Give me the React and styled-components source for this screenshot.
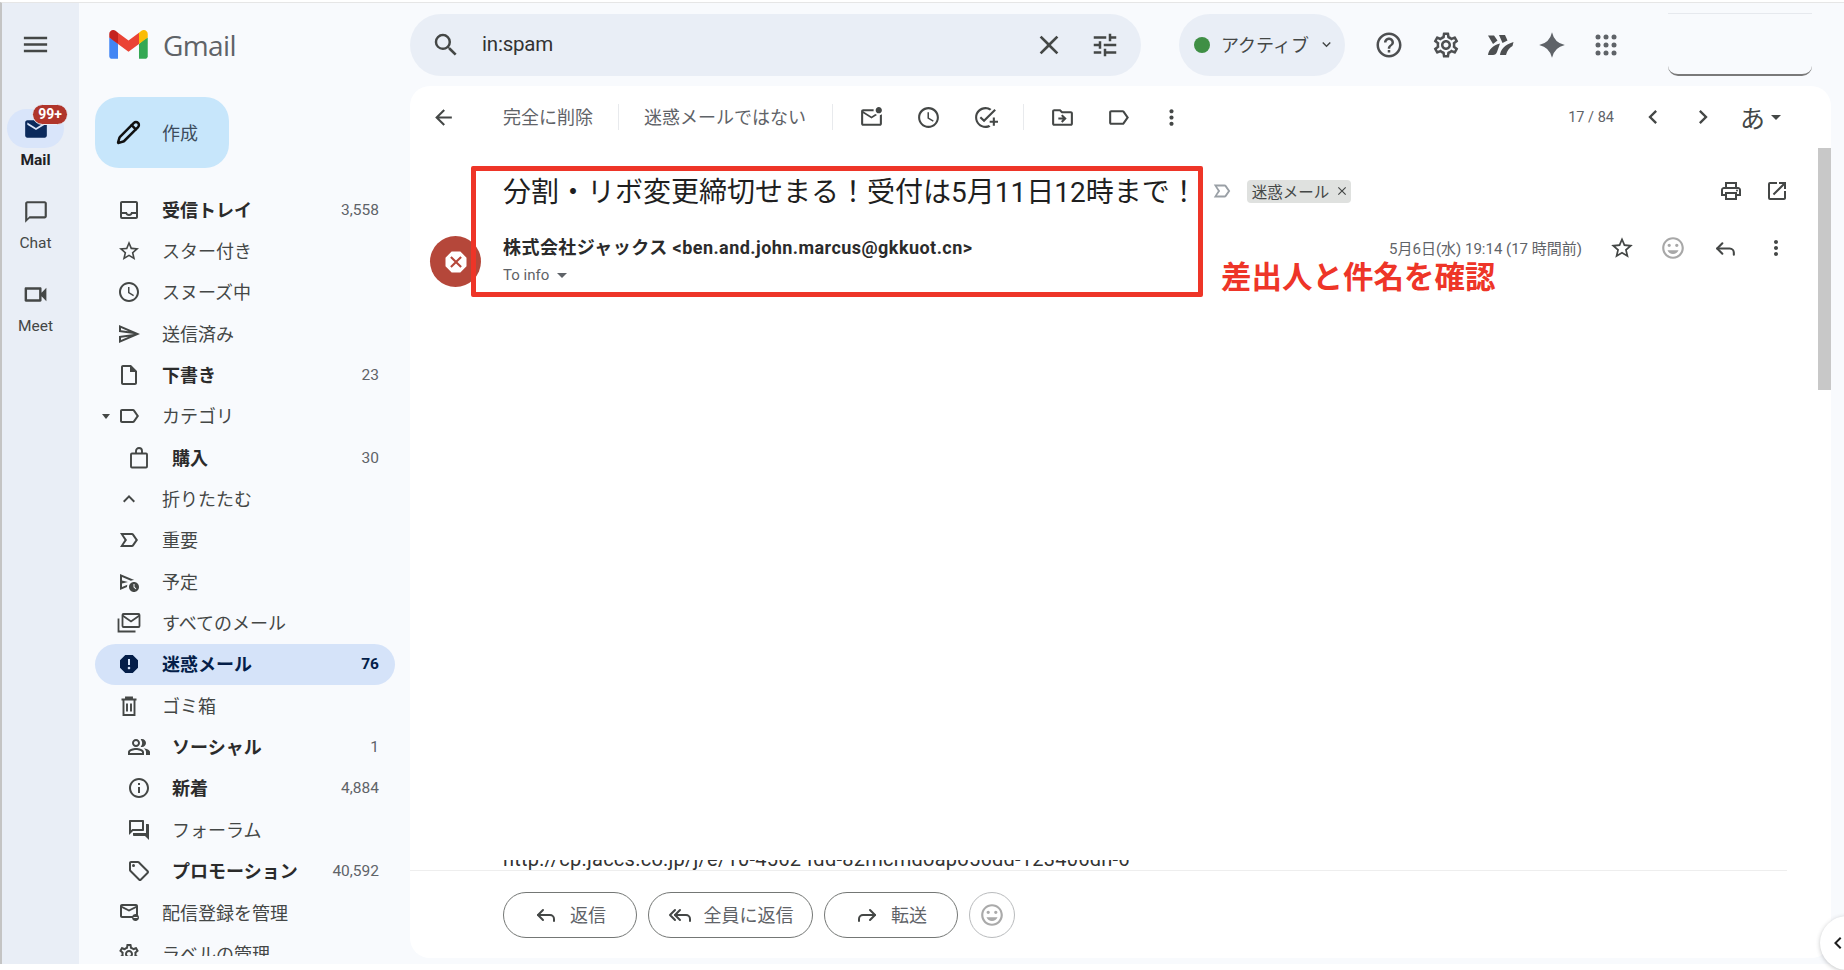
import React from 'react'
import styled, { createGlobalStyle } from 'styled-components'
import {
  MdMenu, MdEmail, MdOutlineChatBubbleOutline, MdOutlineVideocam, MdOutlineInbox, MdStarBorder,
  MdOutlineAccessTime, MdOutlineSend, MdOutlineInsertDriveFile, MdOutlineLabel,
  MdExpandLess, MdExpandMore, MdOutlineScheduleSend, MdReport,
  MdOutlinePeopleAlt, MdInfoOutline, MdOutlineForum, MdOutlineLocalOffer, MdOutlineUnsubscribe,
  MdOutlineSettings, MdSearch, MdClose, MdOutlineTune, MdHelpOutline, MdArrowBack, MdOutlineMarkEmailUnread,
  MdOutlineAddTask, MdOutlineDriveFileMove, MdMoreVert, MdChevronLeft, MdChevronRight, MdOutlinePrint,
  MdOpenInNew, MdDangerous, MdOutlineInsertEmoticon,
} from 'react-icons/md'
import { Reply, ReplyAll, Forward, Pencil } from 'lucide-react'

const GlobalStyle = createGlobalStyle`
  html, body { margin: 0; padding: 0; background: #fff; overflow: hidden; }
  body { font-family: Roboto, "Noto Sans CJK JP", sans-serif; color: #444746; }
  * { box-sizing: border-box; }
`

const PageWrap = styled.div`
  position: relative;
  overflow: hidden;
  width: 1844px;
  height: 970px;
`
const Page = styled.div`
  width: 1844px;
  height: 970px;
  padding-top: 2px;
  background: #fff;
`
const Shell = styled.div`
  height: 962px;
  display: flex;
  border-top: 1px solid #e6e6e6;
  border-left: 2px solid #c4c4c4;
  background: #f8fafd;
`
/* japanese glyphs sit a bit low in the line, lift them */
const Cjk = styled.span`
  padding-bottom: 2px;
  white-space: nowrap;
`

const Rail = styled.div`
  width: 77px;
  flex: none;
  padding-right: 10px;
  background: #e9eef6;
  display: flex;
  flex-direction: column;
  align-items: center;
`
const RailTop = styled.div`
  height: 83px;
  margin-bottom: 23px;
  display: flex;
  align-items: center;
  font-size: 31px;
  color: #444746;
`
const RailItem = styled.div`
  display: flex;
  flex-direction: column;
  align-items: center;
  margin-bottom: 20px;
`
const RailPill = styled.div`
  position: relative;
  width: 57px;
  height: 39px;
  border-radius: 20px;
  display: flex;
  align-items: center;
  justify-content: center;
  font-size: ${p => p.$size || 26}px;
  color: ${p => (p.$active ? '#0b2a5c' : '#444746')};
  background: ${p => (p.$active ? '#d9e5fa' : 'transparent')};
`
const RailBadge = styled.span`
  position: absolute;
  left: 25px;
  top: -5px;
  width: 36px;
  height: 21px;
  border-radius: 11px;
  border: 1px solid #e9eef6;
  background: #b0352b;
  color: #fff;
  font-size: 14px;
  font-weight: 700;
  line-height: 19px;
  text-align: center;
`
const RailLabel = styled.div`
  height: 24px;
  line-height: 24px;
  font-size: 15.5px;
  font-weight: ${p => (p.$active ? 700 : 400)};
  color: ${p => (p.$active ? '#202124' : '#444746')};
`

const LeftCol = styled.div`
  width: 331px;
  flex: none;
  display: flex;
  flex-direction: column;
`
const Brand = styled.div`
  height: 83px;
  flex: none;
  padding-left: 30px;
  display: flex;
  align-items: center;
  gap: 15px;
`
const BrandText = styled.span`
  font-family: "Open Sans", Roboto, sans-serif;
  font-size: 28px;
  letter-spacing: -0.6px;
  color: #5f6368;
`
const Compose = styled.div`
  width: 134px;
  height: 71px;
  flex: none;
  margin: 11px 0 21px 16px;
  border-radius: 24px;
  background: #c7e6fb;
  display: flex;
  align-items: center;
  font-size: 18px;
  color: #3c4c5c;
`
const ComposeIcon = styled.span`
  width: 67px;
  flex: none;
  display: flex;
  justify-content: center;
  color: #111;
`
const Nav = styled.div`
  flex: 1;
  min-height: 0;
  margin-bottom: 8px;
  overflow: hidden;
`
const NavRow = styled.div`
  position: relative;
  width: 300px;
  height: 41.35px;
  margin-left: 16px;
  padding: 0 16px 0 ${p => (p.$sub ? 10 : 0)}px;
  border-radius: 21px;
  display: flex;
  align-items: center;
  font-size: 18px;
  font-weight: ${p => (p.$bold ? 700 : 400)};
  color: ${p => (p.$active ? '#041e49' : p.$bold ? '#2b2b2b' : '#444746')};
  background: ${p => (p.$active ? '#d5e3f9' : 'transparent')};
`
const NavIcon = styled.span`
  width: 67px;
  flex: none;
  display: flex;
  justify-content: center;
  font-size: 24px;
  color: ${p => (p.$active ? '#041e49' : '#444746')};
`
const NavCount = styled.span`
  margin-left: auto;
  font-family: Roboto, sans-serif;
  font-size: 15.5px;
  font-weight: ${p => (p.$active ? 700 : 400)};
  color: ${p => (p.$active ? '#041e49' : '#5f6368')};
`
const NavCaret = styled.i`
  position: absolute;
  left: 7px;
  top: 18px;
  border-left: 4.5px solid transparent;
  border-right: 4.5px solid transparent;
  border-top: 5px solid #444746;
`

const RightCol = styled.div`
  flex: 1;
  min-width: 0;
  display: flex;
  flex-direction: column;
`
const Header = styled.div`
  height: 83px;
  flex: none;
  display: flex;
  align-items: center;
`
const Search = styled.div`
  width: 731px;
  height: 62px;
  flex: none;
  padding-right: 8px;
  border-radius: 31px;
  background: #e9eef6;
  display: flex;
  align-items: center;
  font-size: 20.5px;
  color: #333;
`
const SearchBtn = styled.span`
  width: ${p => p.$w}px;
  flex: none;
  display: flex;
  justify-content: center;
  font-size: ${p => p.$size || 30}px;
  color: #444746;
`
const SearchText = styled.span`
  flex: 1;
  padding-bottom: 2px;
  letter-spacing: -0.2px;
`
const Status = styled.div`
  width: 166px;
  height: 62px;
  flex: none;
  margin: 0 17px 0 38px;
  padding-left: 15px;
  border-radius: 31px;
  background: #e9eef6;
  display: flex;
  align-items: center;
  font-size: 18px;
  color: #444746;
`
const StatusDot = styled.i`
  width: 16px;
  height: 16px;
  margin-right: 11px;
  border-radius: 50%;
  background: #3f8f45;
`
const HeadBtn = styled.span`
  width: ${p => p.$w}px;
  flex: none;
  display: flex;
  justify-content: center;
  font-size: 30px;
  color: #4d4f51;
`
const Profile = styled.div`
  width: 144px;
  height: 63px;
  margin-left: 35px;
  border-top: 1px solid #e6e9ee;
  border-bottom: 2px solid #7a7a7a;
  border-radius: 0 0 10px 10px;
`

const Card = styled.div`
  position: relative;
  flex: 1;
  min-height: 0;
  width: 1421px;
  margin-bottom: 6px;
  border-radius: 20px;
  background: #fff;
  overflow: hidden;
  display: flex;
  flex-direction: column;
`
const Toolbar = styled.div`
  height: 62px;
  flex: none;
  padding: 0 50px 0 8px;
  display: flex;
  align-items: center;
  font-size: 18px;
  color: #5f6368;
`
const ToolBtn = styled.span`
  width: ${p => p.$w || 56}px;
  flex: none;
  display: flex;
  justify-content: center;
  font-size: ${p => p.$size || 25}px;
  color: #444746;
`
const ToolText = styled(Cjk)`
  margin-left: ${p => p.$left}px;
`
const ToolSep = styled.i`
  width: 1px;
  height: 26px;
  flex: none;
  margin: 0 ${p => p.$right}px 0 ${p => p.$left}px;
  background: #e8eaed;
`
const Pager = styled.span`
  margin-left: auto;
  margin-right: 14px;
  font-family: Roboto, sans-serif;
  font-size: 14.5px;
`
const LangBtn = styled.span`
  margin-left: 12px;
  font-size: 25px;
  color: #444746;
`
const LangCaret = styled.i`
  margin-left: 6px;
  border-left: 5px solid transparent;
  border-right: 5px solid transparent;
  border-top: 5px solid #444746;
`

const SubjectRow = styled.div`
  height: 62px;
  flex: none;
  margin-top: 12px;
  padding: 0 31px 0 93px;
  display: flex;
  align-items: center;
`
const Subject = styled.h1`
  margin: 0 0 2px;
  font-size: 28px;
  font-weight: 400;
  color: #1f1f1f;
  white-space: nowrap;
`
const ImportantMark = styled.span`
  margin: 0 14px 0 13px;
  display: flex;
  font-size: 22px;
  color: #9aa0a6;
`
const Chip = styled.span`
  width: 104px;
  height: 23px;
  padding-left: 5px;
  border-radius: 4px;
  background: #dfe1df;
  display: flex;
  align-items: center;
  gap: 6px;
  font-size: 15.5px;
  color: #444746;
`
const ActionSlot = styled.span`
  width: ${p => p.$w || 46}px;
  flex: none;
  display: flex;
  justify-content: center;
  font-size: ${p => p.$size || 24}px;
  color: ${p => p.$color || '#444746'};
`
const Actions = styled.div`
  margin-left: auto;
  display: flex;
  align-items: center;
`

const MessageRow = styled.div`
  flex: none;
  margin-top: 14px;
  padding: 0 30px 0 20px;
  display: flex;
  align-items: flex-start;
`
const Avatar = styled.div`
  width: 51px;
  height: 51px;
  flex: none;
  border-radius: 50%;
  background: #b5473a;
  display: flex;
  align-items: center;
  justify-content: center;
  font-size: 28px;
  color: #fff;
`
const Info = styled.div`
  margin-left: 22px;
`
const Sender = styled.div`
  height: 24px;
  line-height: 24px;
  font-size: 18px;
  font-weight: 700;
  letter-spacing: 0.45px;
  color: #2b2b2b;
`
const ToLine = styled.div`
  height: 26px;
  margin-top: 2px;
  display: flex;
  align-items: center;
  gap: 8px;
  font-size: 15px;
  color: #5f6368;
`
const ToCaret = styled.i`
  border-left: 5px solid transparent;
  border-right: 5px solid transparent;
  border-top: 5px solid #5f6368;
`
const Meta = styled.div`
  height: 24px;
  margin-left: auto;
  display: flex;
  align-items: center;
`
const DateText = styled.span`
  margin: 0 15px 2px 0;
  font-size: 15px;
  color: #5f6368;
`

const Body = styled.div`
  flex: 1;
  min-height: 0;
  display: flex;
  flex-direction: column;
  justify-content: flex-end;
`
/* the mail text is scrolled away, only the lower edge of one line shows */
const CutLine = styled.div`
  height: 10px;
  margin-left: 93px;
  overflow: hidden;
  line-height: 20px;
  font-size: 20px;
  letter-spacing: 0.25px;
  color: #333;
  white-space: nowrap;
`
const CutText = styled.div`
  margin-top: -11px;
`
const Footer = styled.div`
  height: 88px;
  flex: none;
  padding: 22px 0 0 93px;
  position: relative;
  display: flex;
  gap: 11px;
  &::before {
    content: '';
    position: absolute;
    left: 0;
    top: 0;
    width: 1377px;
    height: 1px;
    background: #eeeeee;
  }
`
const ReplyBtn = styled.div`
  width: ${p => p.$w}px;
  height: 46px;
  border: 1px solid #747775;
  border-radius: 23px;
  display: flex;
  align-items: center;
  justify-content: center;
  gap: 12px;
  font-size: 18px;
  color: #5f6368;
  svg { color: #444746; }
`
const EmojiBtn = styled.div`
  width: 46px;
  height: 46px;
  border: 1px solid #b9bbbd;
  border-radius: 50%;
  display: flex;
  align-items: center;
  justify-content: center;
  font-size: 26px;
  color: #aaaaaa;
`

const Scrollbar = styled.div`
  position: absolute;
  right: 0;
  top: 62px;
  width: 13px;
  height: 242px;
  background: #c8c8c8;
`
const Highlight = styled.div`
  position: absolute;
  left: 61px;
  top: 80px;
  width: 732px;
  height: 131px;
  border: 5px solid #ee3528;
  border-radius: 2px;
`
const Note = styled.div`
  position: absolute;
  left: 811px;
  top: 177px;
  font-size: 30.5px;
  font-weight: 700;
  line-height: 30px;
  color: #ee3528;
  white-space: nowrap;
`
const SideHandle = styled.div`
  position: absolute;
  right: -30px;
  top: 916px;
  width: 54px;
  height: 54px;
  padding-left: 6px;
  border-radius: 50%;
  background: #fff;
  box-shadow: 0 1px 4px rgba(60, 64, 67, 0.3);
  display: flex;
  align-items: center;
  font-size: 24px;
  color: #1f1f1f;
`

const GmailLogo = () => (
  <svg width="39" height="29" viewBox="0 0 256 193">
    <path fill="#4285F4" d="M58.18 192.05V93.14L27.5 65.08 0 49.5v125.09c0 9.66 7.83 17.46 17.46 17.46z" />
    <path fill="#34A853" d="M197.82 192.05h40.72c9.66 0 17.46-7.83 17.46-17.46V49.5l-31.16 17.84-27.02 25.8z" />
    <path fill="#EA4335" d="M58.18 93.14l-4.17-38.65 4.17-36.99L128 69.87l69.82-52.37 4.67 35-4.67 40.64L128 145.5z" />
    <path fill="#FBBC04" d="M197.82 17.5v75.64L256 49.5V26.23c0-21.59-24.64-33.9-41.89-20.95z" />
    <path fill="#C5221F" d="M0 49.5l26.76 20.07L58.18 93.14V17.5L41.89 5.28C24.61-7.67 0 4.64 0 26.23z" />
  </svg>
)

const ImportantIcon = () => (
  <svg width="1em" height="1em" viewBox="0 0 24 24" fill="currentColor">
    <path d="M15 19H3l4.5-7L3 5h12c.65 0 1.26.31 1.63.84L21 12l-4.37 6.16c-.37.52-.98.84-1.63.84zm-8.500-2H15l3.500-5L15 7H6.500l3.500 5-3.500 5z" />
  </svg>
)

const AllMailIcon = () => (
  <svg width="24" height="24" viewBox="0 0 24 24" fill="none" stroke="currentColor" strokeWidth="1.8">
    <rect x="5.500" y="3" width="17" height="13" rx="1" />
    <path d="M5.500 4.500l8.500 6 8.500-6" />
    <path d="M1.500 7.500v13h17" />
  </svg>
)

const BagIcon = () => (
  <svg width="24" height="24" viewBox="0 0 24 24" fill="none" stroke="currentColor" strokeWidth="1.9">
    <rect x="4" y="7.500" width="16" height="14" rx="1" />
    <path d="M9 7.500V5a3 3 0 0 1 6 0v2.500" />
  </svg>
)

const TrashIcon = () => (
  <svg width="24" height="24" viewBox="0 0 24 24" fill="none" stroke="currentColor" strokeWidth="1.9">
    <path d="M4.500 5.500h15M9 5.500V3.500h6v2M6.500 5.500v15.500h11V5.500M10 9.500v8M14 9.500v8" />
  </svg>
)

const BirdIcon = () => (
  <svg width="27" height="24" viewBox="0 0 27 24" fill="currentColor">
    <path d="M1 2.500h6l3.500 5-4.500 3.500z" />
    <path d="M12 2h6l2.500 5.500-5 2.500z" />
    <path d="M1 22c.5-5 5-10 12-11.500L10 19c-.7 2-2 3-4 3z" />
    <path d="M13 22c.6-5 4-10 13.500-13l-1 4c-3 1.500-5.500 4.500-6.500 9z" />
  </svg>
)

const SparkIcon = () => (
  <svg width="28" height="28" viewBox="0 0 24 24" fill="#5f6368">
    <path d="M12 1Q14 10 23 12 14 14 12 23 10 14 1 12 10 10 12 1z" />
  </svg>
)

const AppsIcon = () => (
  <svg width="22" height="22" viewBox="0 0 22 22" fill="#5f6368">
    {[3, 11, 19].map(y => [3, 11, 19].map(x => <circle key={`${x}-${y}`} cx={x} cy={y} r="2.500" />))}
  </svg>
)

const navItems = [
  { icon: <MdOutlineInbox />, label: '受信トレイ', count: '3,558', bold: true },
  { icon: <MdStarBorder />, label: 'スター付き' },
  { icon: <MdOutlineAccessTime />, label: 'スヌーズ中' },
  { icon: <MdOutlineSend />, label: '送信済み' },
  { icon: <MdOutlineInsertDriveFile />, label: '下書き', count: '23', bold: true },
  { icon: <MdOutlineLabel />, label: 'カテゴリ', caret: true },
  { icon: <BagIcon />, label: '購入', count: '30', bold: true, sub: true },
  { icon: <MdExpandLess />, label: '折りたたむ' },
  { icon: <ImportantIcon />, label: '重要' },
  { icon: <MdOutlineScheduleSend />, label: '予定' },
  { icon: <AllMailIcon />, label: 'すべてのメール' },
  { icon: <MdReport />, label: '迷惑メール', count: '76', bold: true, active: true },
  { icon: <TrashIcon />, label: 'ゴミ箱' },
  { icon: <MdOutlinePeopleAlt />, label: 'ソーシャル', count: '1', bold: true, sub: true },
  { icon: <MdInfoOutline />, label: '新着', count: '4,884', bold: true, sub: true },
  { icon: <MdOutlineForum />, label: 'フォーラム', sub: true },
  { icon: <MdOutlineLocalOffer />, label: 'プロモーション', count: '40,592', bold: true, sub: true },
  { icon: <MdOutlineUnsubscribe />, label: '配信登録を管理' },
  { icon: <MdOutlineSettings />, label: 'ラベルの管理' },
]

const App = () => (
  <PageWrap>
    <GlobalStyle />
    <Page>
      <Shell>
        <Rail>
          <RailTop><MdMenu /></RailTop>
          <RailItem>
            <RailPill $active>
              <MdEmail />
              <RailBadge>99+</RailBadge>
            </RailPill>
            <RailLabel $active>Mail</RailLabel>
          </RailItem>
          <RailItem>
            <RailPill><MdOutlineChatBubbleOutline /></RailPill>
            <RailLabel>Chat</RailLabel>
          </RailItem>
          <RailItem>
            <RailPill $size={29}><MdOutlineVideocam /></RailPill>
            <RailLabel>Meet</RailLabel>
          </RailItem>
        </Rail>

        <LeftCol>
          <Brand>
            <GmailLogo />
            <BrandText>Gmail</BrandText>
          </Brand>
          <Compose>
            <ComposeIcon><Pencil size={25} strokeWidth={2.4} /></ComposeIcon>
            <Cjk>作成</Cjk>
          </Compose>
          <Nav>
            {navItems.map(item => (
              <NavRow key={item.label} $bold={item.bold} $active={item.active} $sub={item.sub}>
                {item.caret && <NavCaret />}
                <NavIcon $active={item.active}>{item.icon}</NavIcon>
                <Cjk>{item.label}</Cjk>
                {item.count && <NavCount $active={item.active}>{item.count}</NavCount>}
              </NavRow>
            ))}
          </Nav>
        </LeftCol>

        <RightCol>
          <Header>
            <Search>
              <SearchBtn $w={72}><MdSearch /></SearchBtn>
              <SearchText>in:spam</SearchText>
              <SearchBtn $w={56} $size={32}><MdClose /></SearchBtn>
              <SearchBtn $w={56}><MdOutlineTune /></SearchBtn>
            </Search>
            <Status>
              <StatusDot />
              <Cjk>アクティブ</Cjk>
              <SearchBtn $w={34} $size={17}><MdExpandMore /></SearchBtn>
            </Status>
            <HeadBtn $w={54}><MdHelpOutline /></HeadBtn>
            <HeadBtn $w={59}><MdOutlineSettings /></HeadBtn>
            <HeadBtn $w={50}><BirdIcon /></HeadBtn>
            <HeadBtn $w={54}><SparkIcon /></HeadBtn>
            <HeadBtn $w={54}><AppsIcon /></HeadBtn>
            <Profile />
          </Header>

          <Card>
            <Toolbar>
              <ToolBtn $w={50}><MdArrowBack /></ToolBtn>
              <ToolText $left={35}>完全に削除</ToolText>
              <ToolSep $left={25} $right={25} />
              <ToolText $left={0}>迷惑メールではない</ToolText>
              <ToolSep $left={26} $right={10} />
              <ToolBtn><MdOutlineMarkEmailUnread /></ToolBtn>
              <ToolBtn $w={58}><MdOutlineAccessTime /></ToolBtn>
              <ToolBtn><MdOutlineAddTask /></ToolBtn>
              <ToolSep $left={10} $right={10} />
              <ToolBtn><MdOutlineDriveFileMove /></ToolBtn>
              <ToolBtn><MdOutlineLabel /></ToolBtn>
              <ToolBtn $w={50}><MdMoreVert /></ToolBtn>
              <Pager>17 / 84</Pager>
              <ToolBtn $w={50} $size={28}><MdChevronLeft /></ToolBtn>
              <ToolBtn $w={50} $size={28}><MdChevronRight /></ToolBtn>
              <LangBtn>あ</LangBtn>
              <LangCaret />
            </Toolbar>

            <SubjectRow>
              <Subject>分割・リボ変更締切せまる！受付は5月11日12時まで！</Subject>
              <ImportantMark><ImportantIcon /></ImportantMark>
              <Chip>迷惑メール<MdClose size={14} /></Chip>
              <Actions>
                <ActionSlot><MdOutlinePrint /></ActionSlot>
                <ActionSlot><MdOpenInNew /></ActionSlot>
              </Actions>
            </SubjectRow>

            <MessageRow>
              <Avatar><MdDangerous /></Avatar>
              <Info>
                <Sender>株式会社ジャックス &lt;ben.and.john.marcus@gkkuot.cn&gt;</Sender>
                <ToLine>To info <ToCaret /></ToLine>
              </Info>
              <Meta>
                <DateText>5月6日(水) 19:14 (17 時間前)</DateText>
                <ActionSlot $w={50} $size={26}><MdStarBorder /></ActionSlot>
                <ActionSlot $w={52} $size={26} $color="#a8a8a8"><MdOutlineInsertEmoticon /></ActionSlot>
                <ActionSlot $w={52}><Reply size={25} strokeWidth={2} /></ActionSlot>
                <ActionSlot $w={50}><MdMoreVert /></ActionSlot>
              </Meta>
            </MessageRow>

            <Body>
              <CutLine>
                <CutText>http://cp.jaccs.co.jp/j/e/10-4562 fdd-82mcmdoapo56dd-123406dh-6</CutText>
              </CutLine>
            </Body>

            <Footer>
              <ReplyBtn $w={134}><Reply size={24} strokeWidth={2} /><Cjk>返信</Cjk></ReplyBtn>
              <ReplyBtn $w={165}><ReplyAll size={24} strokeWidth={2} /><Cjk>全員に返信</Cjk></ReplyBtn>
              <ReplyBtn $w={134}><Forward size={24} strokeWidth={2} /><Cjk>転送</Cjk></ReplyBtn>
              <EmojiBtn><MdOutlineInsertEmoticon /></EmojiBtn>
            </Footer>

            <Scrollbar />
            <Highlight />
            <Note>差出人と件名を確認</Note>
          </Card>
        </RightCol>
      </Shell>
    </Page>
    <SideHandle><MdChevronLeft /></SideHandle>
  </PageWrap>
)

export default App
